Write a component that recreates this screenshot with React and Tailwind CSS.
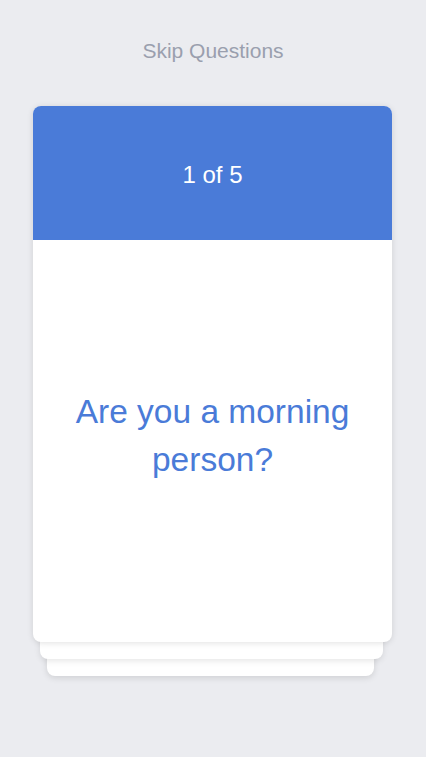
export default function App() {
  return (
    <div
      className="min-h-[757px] w-full bg-[#ebecf0] flex flex-col"
      style={{ fontFamily: '"Liberation Sans", Arial, sans-serif' }}
    >
      <div className="pt-[36px] text-center text-[21px] leading-[30px] text-[#9a9fae]">Skip Questions</div>

      <div className="relative mt-[40px] ml-[33px] w-[359px]">
        {/* cards stacked behind */}
        <div className="absolute left-[14px] right-[18px] top-[40px] h-[530px] rounded-lg bg-white shadow-[0_2px_6px_rgba(0,0,0,0.12)]" />
        <div className="absolute left-[7px] right-[9px] top-[20px] h-[533px] rounded-lg bg-white shadow-[0_2px_6px_rgba(0,0,0,0.1)]" />

        <div className="relative rounded-lg bg-white shadow-[0_1px_6px_rgba(0,0,0,0.12)] overflow-hidden">
          <div className="h-[134px] bg-[#4a7bd8] flex items-center justify-center pt-[4px] text-white text-[24px]">
            1 of 5
          </div>
          <div className="h-[402px] flex items-center justify-center px-7 pb-[10px]">
            <p className="text-center text-[#4a7bd8] text-[33.5px] leading-[48px] font-light">
              Are you a morning person?
            </p>
          </div>
        </div>
      </div>
    </div>
  )
}
